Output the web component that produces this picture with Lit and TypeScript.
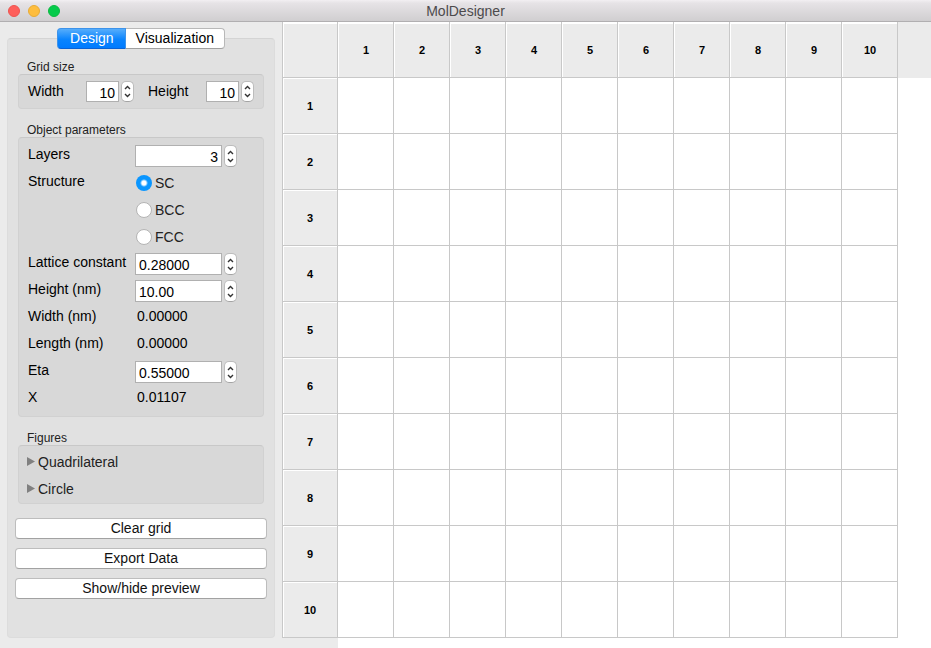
import { LitElement, html, css } from "lit";
import { customElement, property, state } from "lit/decorators.js";

const base = css`
  * { box-sizing: border-box; }
  button, input { font: inherit; color: inherit; margin: 0; }
`;

@customElement("spin-box")
class SpinBox extends LitElement {
  @property() value = "";
  @property() label = "";
  @property({ type: Number }) step = 1;
  @property({ type: Number }) digits = 0;

  static styles = [base, css`
    :host { display: flex; gap: 2px; height: 22px; }
    .field {
      flex: 1; min-width: 0; height: 100%; padding: 2px 3px 0;
      border: 1px solid #b0b0b0; border-radius: 0; background: #fff; outline: none;
    }
    .field.right { text-align: right; }
    .stepper {
      display: flex; flex-direction: column; width: 13px; overflow: hidden; padding: 2px 0;
      border: 1px solid #bcbcbc; border-bottom-color: #a4a4a4; border-radius: 5px; background: #fff;
    }
    .arrow {
      flex: 1; min-height: 0; display: flex; align-items: center; justify-content: center;
      padding: 0; border: 0; background: none;
    }
    svg { display: block; fill: none; stroke: #333; stroke-width: 1.4; }
  `];

  private bump(dir: number) {
    this.value = (Number(this.value) + dir * this.step).toFixed(this.digits);
  }

  render() {
    return html`
      <input class="field ${this.digits ? "" : "right"}" type="text" aria-label=${this.label}
        .value=${this.value} @change=${(e: Event) => (this.value = (e.target as HTMLInputElement).value)}>
      <div class="stepper">
        <button class="arrow" aria-label="Increase ${this.label}" @click=${() => this.bump(1)}>
          <svg width="7" height="5" viewBox="0 0 7 5"><path d="M1 4 3.500 1.500 6 4"/></svg>
        </button>
        <button class="arrow" aria-label="Decrease ${this.label}" @click=${() => this.bump(-1)}>
          <svg width="7" height="5" viewBox="0 0 7 5"><path d="M1 1 3.500 3.500 6 1"/></svg>
        </button>
      </div>`;
  }
}

@customElement("design-panel")
class DesignPanel extends LitElement {
  @state() private structure = "SC";
  @state() private tab = "Design";

  static styles = [base, css`
    :host { display: flex; flex-direction: column; padding: 6px 7px 10px; background: #ebebeb; }
    .tabs { display: flex; align-self: center; height: 21px; margin-bottom: -11px; z-index: 1; }
    .tab {
      padding: 0 10px; border: 1px solid #b8b8b8; border-bottom-color: #a0a0a0; border-left: 0;
      border-radius: 0 4px 4px 0; background: #fff; line-height: 19px;
    }
    .tab:first-child { padding: 0 11px 0 12px; border-left: 1px solid #b8b8b8; border-radius: 4px 0 0 4px; }
    .tab.on, .tab.on:first-child {
      border-color: #3d93ea; border-bottom-color: #0a62d4; color: #fff;
      background: linear-gradient(#56adfb, #0a84fe 55%, #007bff);
    }
    .panel {
      flex: 1; padding: 21px 10px 0; border: 1px solid #dcdcdc; border-top-color: #d4d4d4;
      border-radius: 4px; background: #e1e1e1;
    }
    .title { margin: 0; padding-left: 9px; font-size: 12px; font-weight: 400; line-height: 14px; color: #222; }
    .group {
      margin-bottom: 14px; padding: 4px 9px; border: 1px solid #d1d1d1; border-top-color: #c8c8c8;
      border-radius: 4px; background: #d8d8d8;
    }
    .size { display: flex; align-items: center; padding: 4px 9px; }
    .size .name { width: 58px; line-height: 25px; }
    .size spin-box { width: 48px; height: 21px; margin-right: 14px; }
    .size spin-box:last-child { margin-right: 0; }
    .form { display: grid; grid-template-columns: 107px 102px; grid-auto-rows: 27px; line-height: 25px; }
    .form spin-box { align-self: end; margin-bottom: 2px; line-height: normal; }
    .name { white-space: nowrap; }
    .value { padding-left: 2px; }
    .radio { display: flex; align-items: center; gap: 3px; padding: 1px 0 0 1px; color: #222; }
    .dot {
      appearance: none; width: 16px; height: 16px; border: 1px solid #b4b4b4;
      border-radius: 50%; background: #fff;
    }
    .dot:checked { border: 0; background: radial-gradient(circle, #fff 2px, #0a96ff 4px); }
    .radios { grid-row: span 3; display: grid; grid-auto-rows: 27px; }
    .figures { padding: 2px 8px 1px; }
    .fold {
      display: flex; align-items: center; gap: 3px; width: 100%; height: 27px; padding: 0;
      border: 0; background: none; color: #222;
    }
    .fold svg { fill: #808080; }
    .actions { display: grid; gap: 9px; margin: 0 -3px; }
    .action {
      height: 21px; padding: 0; border: 1px solid #bdbdbd; border-bottom-color: #a2a2a2;
      border-radius: 4px; background: #fff; line-height: 19px; color: #111;
    }
  `];

  private spin(label: string, value: string, step = 1, digits = 0) {
    return html`<span class="name">${label}</span>
      <spin-box label=${label} value=${value} .step=${step} .digits=${digits}></spin-box>`;
  }

  render() {
    return html`
      <div class="tabs" role="tablist">
        ${["Design", "Visualization"].map((t) => html`
          <button class="tab ${t === this.tab ? "on" : ""}" role="tab" aria-selected=${t === this.tab}
            @click=${() => (this.tab = t)}>${t}</button>`)}
      </div>
      <div class="panel">
        <h2 class="title">Grid size</h2>
        <div class="group size">${this.spin("Width", "10")}${this.spin("Height", "10")}</div>

        <h2 class="title">Object parameters</h2>
        <div class="group form">
          ${this.spin("Layers", "3")}
          <span class="name" id="structure">Structure</span>
          <div class="radios" role="radiogroup" aria-labelledby="structure">
            ${["SC", "BCC", "FCC"].map((s) => html`
              <label class="radio"><input class="dot" type="radio" name="structure" .checked=${s === this.structure}
                @change=${() => (this.structure = s)}>${s}</label>`)}
          </div>
          <span></span><span></span>
          ${this.spin("Lattice constant", "0.28000", 0.01, 5)}
          ${this.spin("Height (nm)", "10.00", 1, 2)}
          <span class="name">Width (nm)</span><output class="value">0.00000</output>
          <span class="name">Length (nm)</span><output class="value">0.00000</output>
          ${this.spin("Eta", "0.55000", 0.01, 5)}
          <span class="name">X</span><output class="value">0.01107</output>
        </div>

        <h2 class="title">Figures</h2>
        <div class="group figures">
          ${["Quadrilateral", "Circle"].map((f) => html`
            <button class="fold" aria-expanded="false">
              <svg width="8" height="10" viewBox="0 0 8 10"><path d="M0 0 8 4.500 0 9z"/></svg>${f}
            </button>`)}
        </div>

        <div class="actions">
          ${["Clear grid", "Export Data", "Show/hide preview"].map((a) => html`<button class="action">${a}</button>`)}
        </div>
      </div>`;
  }
}

@customElement("cell-grid")
class CellGrid extends LitElement {
  @property({ type: Number }) size = 10;

  static styles = [base, css`
    :host {
      display: block; overflow: hidden;
      background:
        linear-gradient(#ebebeb, #ebebeb) 0 0 / 100% 56px no-repeat,
        linear-gradient(#ebebeb, #ebebeb) 0 0 / 56px 100% no-repeat,
        #fff;
    }
    table { border-collapse: separate; border-spacing: 0; table-layout: fixed; width: 616px; }
    th, td { height: 56px; padding: 0; border: 0 solid #c8c8c8; border-width: 0 1px 1px 0; }
    th {
      padding-left: 1px; font-size: 11px; font-weight: 700; text-align: center; color: #000;
      background: #ebebeb; box-shadow: inset 1px 1px #fff;
    }
    thead th { box-shadow: inset 1px 2px #fff; }
    th:first-child { padding-left: 0; border-left-width: 1px; }
  `];

  render() {
    const n = Array.from({ length: this.size }, (_, i) => i + 1);
    return html`<table>
      <thead><tr><th></th>${n.map((c) => html`<th scope="col">${c}</th>`)}</tr></thead>
      <tbody>${n.map((r) => html`<tr><th scope="row">${r}</th>${n.map(() => html`<td></td>`)}</tr>`)}</tbody>
    </table>`;
  }
}

@customElement("app-root")
class AppRoot extends LitElement {
  static styles = [base, css`
    :host {
      display: flex; flex-direction: column; min-height: 100vh; background: #fff;
      font: 14px "Liberation Sans", Arial, sans-serif; color: #000;
    }
    .bar {
      display: grid; grid-template-columns: 1fr auto 1fr; align-items: center; height: 22px; padding: 0 8px;
      border-bottom: 1px solid #b1afb1; background: linear-gradient(#f2eff2, #e6e3e6 15%, #d0ced0);
    }
    .lights { display: flex; gap: 8px; }
    .light { width: 12px; height: 12px; padding: 0; border: 1px solid #ee5450; border-radius: 50%; background: #fe5f5b; }
    .light.min { border-color: #e8ab35; background: #febd3e; }
    .light.max { border-color: #0cb942; background: #06cb4b; }
    .name { margin: 0; font-size: 14px; font-weight: 400; line-height: 20px; color: #4c4a4c; }
    .body { flex: 1; display: flex; }
    design-panel { flex: 0 0 282px; }
    cell-grid { flex: 1; min-width: 0; }
  `];

  render() {
    return html`
      <header class="bar">
        <div class="lights">
          <button class="light" aria-label="Close"></button>
          <button class="light min" aria-label="Minimize"></button>
          <button class="light max" aria-label="Zoom"></button>
        </div>
        <h1 class="name">MolDesigner</h1>
      </header>
      <main class="body">
        <design-panel></design-panel>
        <cell-grid></cell-grid>
      </main>`;
  }
}
